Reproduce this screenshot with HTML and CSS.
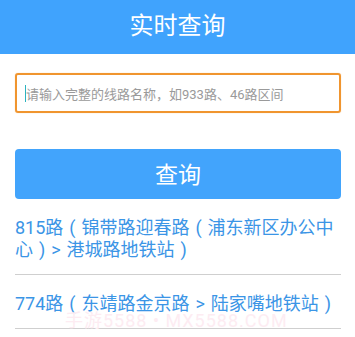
FILE: index.html
```html
<!DOCTYPE html>
<html lang="zh">
<head>
<meta charset="utf-8">
<link rel="stylesheet" href="styles.css">
</head>
<body>
<header class="header">实时查询</header>
<main class="content">
  <div class="search">
    <span class="cursor"></span>
    <span class="placeholder">请输入完整的线路名称，如933路、46路区间</span>
  </div>
  <button class="btn">查询</button>
  <ul class="list">
    <li class="item">815路 ( 锦带路迎春路 ( 浦东新区办公中心 ) &gt; 港城路地铁站 )</li>
    <li class="item">774路 ( 东靖路金京路 &gt; 陆家嘴地铁站 )</li>
  </ul>
</main>
<div class="watermark">手游5588 • MX5588.COM</div>
</body>
</html>
```
FILE: styles.css
```css
* { box-sizing: border-box; }
html, body { margin: 0; padding: 0; }
body {
  width: 355px;
  height: 337px;
  overflow: hidden;
  background: #ffffff;
  font-family: Roboto, "Noto Sans CJK SC", sans-serif;
  position: relative;
}
.header {
  height: 54px;
  background: #40a3fd;
  color: #ffffff;
  font-size: 24px;
  display: flex;
  align-items: center;
  justify-content: center;
  padding-bottom: 7px;
}
.content {
  padding: 0 14px 0 15px;
}
.search {
  margin-top: 19px;
  height: 40px;
  border: 2px solid #f0952f;
  border-radius: 3px;
  box-shadow: 0 0 1px rgba(240,149,47,0.6);
  display: flex;
  align-items: center;
  padding-left: 8px;
}
.cursor {
  width: 1px;
  height: 17px;
  background: #2bb3c0;
}
.placeholder {
  font-size: 13px;
  color: #9a9a9a;
  white-space: nowrap;
}
.btn {
  display: flex;
  align-items: center;
  justify-content: center;
  width: 100%;
  margin-top: 36px;
  height: 50px;
  border: none;
  border-radius: 4px;
  background: #42a4fc;
  color: #ffffff;
  font-family: Roboto, "Noto Sans CJK SC", sans-serif;
  font-size: 23px;
  padding: 0 0 2px;
}
.list {
  list-style: none;
  margin: 0;
  padding: 0;
}
.item {
  padding: 18px 0 13px;
  font-size: 18px;
  line-height: 22px;
  color: #3b95e6;
  word-spacing: 1.5px;
  border-bottom: 1px solid #cfcfcf;
}
.watermark {
  position: absolute;
  left: 65px;
  top: 306px;
  font-size: 18px;
  letter-spacing: 1px;
  color: #fdecf2;
  white-space: nowrap;
  pointer-events: none;
}
```
